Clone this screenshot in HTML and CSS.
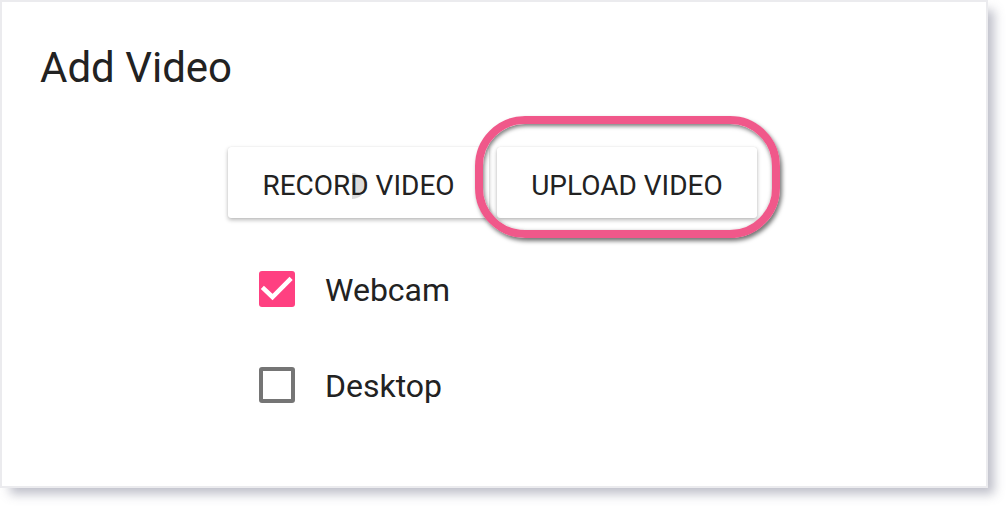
FILE: index.html
```html
<!DOCTYPE html>
<html lang="en">
<head>
<meta charset="utf-8">
<title>Add Video</title>
<link rel="stylesheet" href="styles.css">
</head>
<body>
<div class="card">
  <h1 class="title">Add Video</h1>
  <div class="tabs">
    <button class="tab tab-record"><span class="ripple"></span><span class="tab-label">RECORD VIDEO</span></button>
    <button class="tab tab-upload"><span class="tab-label">UPLOAD VIDEO</span></button>
    <div class="highlight"></div>
  </div>
  <div class="options">
    <label class="option">
      <span class="box checked">
        <svg viewBox="0 0 36 36" width="36" height="36"><polyline points="5,18 13.5,26 30.5,9" fill="none" stroke="#fff" stroke-width="4.5" stroke-linecap="square"/></svg>
      </span>
      <span class="option-label">Webcam</span>
    </label>
    <label class="option">
      <span class="box"></span>
      <span class="option-label">Desktop</span>
    </label>
  </div>
</div>
</body>
</html>
```
FILE: styles.css
```css
html, body {
  margin: 0;
  padding: 0;
  background: #ffffff;
}
body {
  width: 1008px;
  height: 508px;
  overflow: hidden;
  font-family: Roboto, "Liberation Sans", Arial, sans-serif;
  color: #212121;
}
.card {
  margin: 2px 0 0 2px;
  width: 984px;
  height: 484px;
  box-sizing: border-box;
  background: #fff;
  box-shadow: 0 0 0 2px #ebebee, 8px 8px 10px rgba(110, 114, 135, 0.45);
  padding: 41px 0 0 0;
}
.title {
  margin: 0 0 0 38px;
  font-size: 42px;
  line-height: 50px;
  font-weight: 400;
  color: #222;
}
.tabs {
  position: relative;
  display: flex;
  gap: 8px;
  margin: 54px 0 0 226px;
  height: 71px;
}
.tab {
  position: relative;
  height: 71px;
  border: none;
  background: #fff;
  border-radius: 3px;
  box-shadow: 0 2px 4px rgba(0, 0, 0, 0.28), 0 0 1px rgba(0,0,0,0.12);
  font-family: Roboto, "Liberation Sans", Arial, sans-serif;
  font-size: 28px;
  color: #222;
  padding: 5px 0 0 0;
  display: flex;
  align-items: center;
  justify-content: center;
}
.tab-record { width: 261px; }
.tab-upload { width: 260px; }
.tab-label { position: relative; z-index: 1; }
.ripple {
  position: absolute;
  left: 124px;
  top: 26px;
  width: 13px;
  height: 26px;
  background: #dcdcdc;
  border-radius: 0 13px 13px 0;
  z-index: 0;
}
.highlight {
  position: absolute;
  left: 247px;
  top: -31px;
  width: 305px;
  height: 122px;
  box-sizing: border-box;
  border: 8px solid #f0588a;
  border-radius: 50px;
  box-shadow: 2px 3px 4px rgba(0, 0, 0, 0.55), inset 1px 2px 4px rgba(0, 0, 0, 0.55);
  pointer-events: none;
}
.options {
  display: flex;
  flex-direction: column;
  gap: 36px;
  margin: 41px 0 0 257px;
}
.option {
  display: flex;
  align-items: center;
  gap: 30px;
  height: 60px;
}
.box {
  width: 36px;
  height: 36px;
  box-sizing: border-box;
  border: 4px solid #757575;
  border-radius: 3px;
  display: block;
}
.box.checked {
  border: none;
  background: #ff4081;
}
.box svg { display: block; }
.option-label {
  font-size: 32px;
  line-height: 36px;
  color: #222;
  position: relative;
  top: 1px;
}
```
